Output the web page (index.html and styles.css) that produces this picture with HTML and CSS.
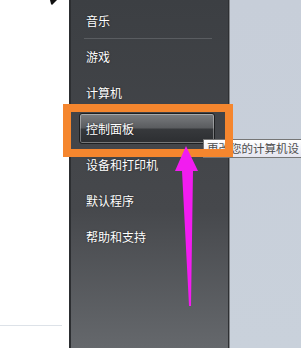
FILE: index.html
```html
<!DOCTYPE html>
<html lang="zh-CN">
<head>
    <meta charset="UTF-8">
    <title>开始菜单</title>
    <link rel="stylesheet" href="styles.css">
</head>
<body>
    <div class="screen">
        <div class="left-pane">
            <div class="left-line"></div>
        </div>
        <div class="menu">
            <div class="item">音乐</div>
            <div class="sep"></div>
            <div class="item">游戏</div>
            <div class="item">计算机</div>
            <div class="item active">控制面板</div>
            <div class="item">设备和打印机</div>
            <div class="item">默认程序</div>
            <div class="item">帮助和支持</div>
        </div>
        <div class="desktop"></div>

        <div class="tooltip">更改您的计算机设</div>
        <div class="highlight"></div>

        <svg class="arrow" width="301" height="348" viewBox="0 0 301 348">
            <polygon points="186,146 198,171 193,171 191,306 189,306 182,171 175,171" fill="#f21cf0"/>
            <polygon points="50,0 57,0 52,5 51,4" fill="#111"/>
        </svg>
    </div>
</body>
</html>
```

FILE: styles.css
```css
body {
    margin: 0;
    font-family: "Noto Sans CJK SC", "Noto Sans", sans-serif;
    overflow: hidden;
}

.screen {
    position: relative;
    display: flex;
    width: 301px;
    height: 348px;
    overflow: hidden;
}

/* white left column */
.left-pane {
    width: 69px;
    background: #fff;
    display: flex;
    flex-direction: column;
    justify-content: flex-end;
}

.left-line {
    height: 1px;
    width: 62px;
    margin-bottom: 22px;
    background: #dde2e8;
}

/* dark right column of the start menu */
.menu {
    width: 150px;
    padding: 5px 0 0 8px;
    display: flex;
    flex-direction: column;
    gap: 5px;
    background: linear-gradient(#3c3f43, #46484c 60%, #65686c);
    border-left: 2px solid #2c2e31;
    border-right: 1px solid #85888c;
    box-shadow: inset -1px 0 0 #2e3033;
}

.item {
    width: 136px;
    height: 31px;
    box-sizing: border-box;
    padding-left: 7px;
    line-height: 31px;
    font-size: 12px;
    color: #fff;
    text-shadow: 0 0 2px rgba(0, 0, 0, 0.6);
    white-space: nowrap;
}

.item.active {
    border: 1px solid #1e2022;
    border-radius: 3px;
    line-height: 29px;
    padding-left: 6px;
    background: linear-gradient(#7a7c7f, #5a5c5f 48%, #37393c 52%, #2c2e31);
    box-shadow: inset 0 0 0 1px rgba(255, 255, 255, 0.35);
}

.sep {
    height: 1px;
    width: 128px;
    margin: -3px 0 -3px 5px;
    background: #5a5d61;
}

.desktop {
    flex: 1;
    background: linear-gradient(#c7ced9, #c9d1db);
}

/* overlays */
.tooltip {
    position: absolute;
    left: 203px;
    top: 139px;
    width: 102px;
    height: 19px;
    box-sizing: border-box;
    padding-left: 3px;
    border: 1px solid #767676;
    border-right: none;
    background: linear-gradient(#fff, #e4e5f0);
    font-size: 11.5px;
    line-height: 17px;
    color: #4c4c4c;
    white-space: nowrap;
}

.highlight {
    position: absolute;
    left: 63px;
    top: 104px;
    width: 170px;
    height: 53px;
    box-sizing: border-box;
    border: 8px solid #f5862e;
}

.arrow {
    position: absolute;
    left: 0;
    top: 0;
}
```
